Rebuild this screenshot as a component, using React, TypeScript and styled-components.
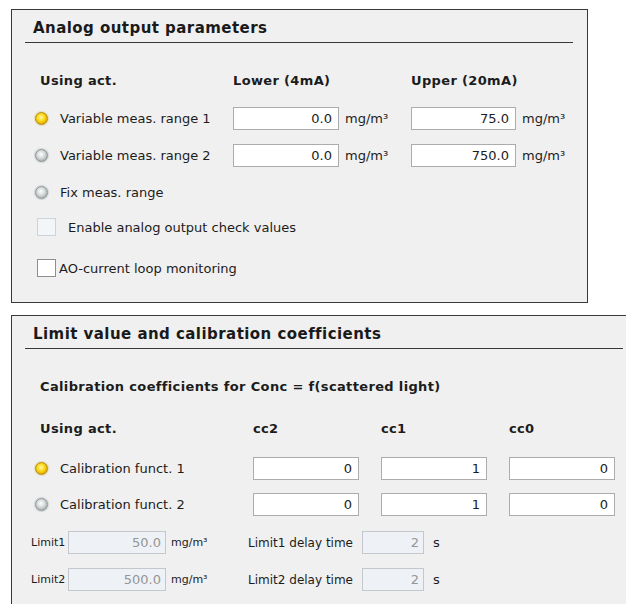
import React from "react";
import styled, { createGlobalStyle, css } from "styled-components";

const Global = createGlobalStyle`
  html, body {
    margin: 0;
    padding: 0;
    background: #ffffff;
    overflow: hidden;
  }
  body {
    font-family: "DejaVu Sans", Tahoma, Verdana, sans-serif;
    font-size: 13px;
    color: #1c1c1c;
  }
`;

const Page = styled.div`
  display: flex;
  flex-direction: column;
  align-items: flex-start;
  gap: 12px;
  padding: 9px 0 0 11px;
`;

const Panel = styled.section<{ $width: number; $height: number; $open?: boolean }>`
  box-sizing: border-box;
  flex: none;
  width: ${(p) => p.$width}px;
  height: ${(p) => p.$height}px;
  background: #f0f0f0;
  border: 1px solid #383838;
  ${(p) =>
    p.$open &&
    css`
      border-bottom: none;
    `}
  display: flex;
  flex-direction: column;
`;

const PanelTitle = styled.h2<{ $right: number }>`
  margin: 0 ${(p) => p.$right}px 0 13px;
  padding: 10px 0 0 8px;
  height: 33px;
  box-sizing: border-box;
  border-bottom: 1px solid #383838;
  font-size: 15px;
  letter-spacing: 0.45px;
  line-height: 17px;
  font-weight: bold;
  color: #1a1a1a;
  white-space: nowrap;
`;

const Row = styled.div<{ $cols: string; $mt: number; $h: number; $gap?: number; $left?: number }>`
  display: grid;
  grid-template-columns: ${(p) => p.$cols};
  column-gap: ${(p) => p.$gap ?? 0}px;
  align-items: center;
  height: ${(p) => p.$h}px;
  margin-top: ${(p) => p.$mt}px;
  padding-left: ${(p) => p.$left ?? 23}px;
`;

const Heading = styled.span<{ $indent?: number }>`
  font-weight: bold;
  letter-spacing: 0.35px;
  padding-left: ${(p) => p.$indent ?? 0}px;
  white-space: nowrap;
`;

const Choice = styled.label`
  display: flex;
  align-items: center;
  white-space: nowrap;
`;

const Led = styled.span<{ $on?: boolean }>`
  box-sizing: border-box;
  width: 13px;
  height: 13px;
  border-radius: 50%;
  margin-right: 12px;
  flex: none;
  ${(p) =>
    p.$on
      ? css`
          background: radial-gradient(circle at 45% 40%, #fff8b0 0%, #ffdc20 38%, #e0ae00 72%, #a87e00 100%);
          border: 1px solid #b58b10;
          box-shadow: 0 0 1px 1px rgba(200, 160, 20, 0.25);
        `
      : css`
          background: radial-gradient(circle at 45% 40%, #ffffff 0%, #dadede 38%, #aeb4b4 72%, #838a8a 100%);
          border: 1px solid #8d9494;
          box-shadow: 0 0 1px 1px rgba(120, 130, 130, 0.25);
        `}
`;

const Box = styled.span<{ $disabled?: boolean; $gap: number }>`
  box-sizing: border-box;
  width: 19px;
  height: 18px;
  margin: 0 ${(p) => p.$gap}px 0 2px;
  flex: none;
  background: ${(p) => (p.$disabled ? "#f3f6f8" : "#ffffff")};
  border: 1px solid ${(p) => (p.$disabled ? "#cfd3d7" : "#8e8e8e")};
`;

const Field = styled.input<{ $width: number; $off?: boolean }>`
  box-sizing: border-box;
  width: ${(p) => p.$width}px;
  height: 23px;
  margin: 0;
  padding: 0 ${(p) => (p.$off ? 4 : 6)}px 0 4px;
  border: 1px solid ${(p) => (p.$off ? "#c4c8cc" : "#acacac")};
  background: ${(p) => (p.$off ? "#eef2f6" : "#ffffff")};
  color: ${(p) => (p.$off ? "#959595" : "#1c1c1c")};
  font: inherit;
  text-align: right;
  outline: none;
`;

const Unit = styled.span<{ $pad?: number; $small?: boolean }>`
  padding-left: ${(p) => p.$pad ?? 6}px;
  font-size: ${(p) => (p.$small ? 11 : 13)}px;
  white-space: nowrap;
`;

const Caption = styled.span<{ $size: number; $end?: boolean }>`
  font-size: ${(p) => p.$size}px;
  white-space: nowrap;
  text-align: ${(p) => (p.$end ? "right" : "left")};
  padding-right: ${(p) => (p.$end ? 9 : 0)}px;
`;

const TOP_COLS = "198px 106px 72px 105px auto";
const CAL_COLS = "196px 106px 106px 106px";
const LIMIT_COLS = "37px 98px 42px 154px 62px auto";

type Range = { label: string; on: boolean; lower: string; upper: string };
const ranges: Range[] = [
  { label: "Variable meas. range 1", on: true, lower: "0.0", upper: "75.0" },
  { label: "Variable meas. range 2", on: false, lower: "0.0", upper: "750.0" },
];

type Calib = { label: string; on: boolean; cc: [string, string, string] };
const calibs: Calib[] = [
  { label: "Calibration funct. 1", on: true, cc: ["0", "1", "0"] },
  { label: "Calibration funct. 2", on: false, cc: ["0", "1", "0"] },
];

const limits = [
  { name: "Limit1", value: "50.0", delay: "2" },
  { name: "Limit2", value: "500.0", delay: "2" },
];

export default function App() {
  return (
    <>
      <Global />
      <Page>
        <Panel $width={577} $height={294}>
          <PanelTitle $right={14}>Analog output parameters</PanelTitle>
          <Row $cols={TOP_COLS} $mt={29} $h={16}>
            <Heading $indent={5}>Using act.</Heading>
            <Heading>Lower (4mA)</Heading>
            <span />
            <Heading>Upper (20mA)</Heading>
          </Row>
          {ranges.map((r, i) => (
            <Row key={r.label} $cols={TOP_COLS} $mt={i === 0 ? 19 : 14} $h={23}>
              <Choice>
                <Led $on={r.on} />
                {r.label}
              </Choice>
              <Field $width={106} readOnly value={r.lower} />
              <Unit>mg/m³</Unit>
              <Field $width={105} readOnly value={r.upper} />
              <Unit>mg/m³</Unit>
            </Row>
          ))}
          <Row $cols={TOP_COLS} $mt={17} $h={16}>
            <Choice>
              <Led />
              Fix meas. range
            </Choice>
          </Row>
          <Row $cols="auto" $mt={18} $h={18}>
            <Choice>
              <Box $disabled $gap={12} />
              Enable analog output check values
            </Choice>
          </Row>
          <Row $cols="auto" $mt={23} $h={18}>
            <Choice>
              <Box $gap={3} />
              AO-current loop monitoring
            </Choice>
          </Row>
        </Panel>

        <Panel $width={640} $height={300} $open>
          <PanelTitle $right={27}>Limit value and calibration coefficients</PanelTitle>
          <Row $cols="auto" $mt={29} $h={16}>
            <Heading $indent={5}>Calibration coefficients for Conc = f(scattered light)</Heading>
          </Row>
          <Row $cols={CAL_COLS} $gap={22} $mt={26} $h={16}>
            <Heading $indent={5}>Using act.</Heading>
            <Heading>cc2</Heading>
            <Heading>cc1</Heading>
            <Heading>cc0</Heading>
          </Row>
          {calibs.map((c, i) => (
            <Row key={c.label} $cols={CAL_COLS} $gap={22} $mt={i === 0 ? 21 : 13} $h={23}>
              <Choice>
                <Led $on={c.on} />
                {c.label}
              </Choice>
              {c.cc.map((v, k) => (
                <Field key={k} $width={106} readOnly value={v} />
              ))}
            </Row>
          ))}
          {limits.map((l, i) => (
            <Row key={l.name} $cols={LIMIT_COLS} $left={19} $mt={i === 0 ? 15 : 14} $h={23}>
              <Caption $size={11}>{l.name}</Caption>
              <Field $width={98} $off readOnly value={l.value} />
              <Unit $pad={5} $small>
                mg/m³
              </Unit>
              <Caption $size={12} $end>
                {l.name} delay time
              </Caption>
              <Field $width={62} $off readOnly value={l.delay} />
              <Unit $pad={9}>s</Unit>
            </Row>
          ))}
        </Panel>
      </Page>
    </>
  );
}
